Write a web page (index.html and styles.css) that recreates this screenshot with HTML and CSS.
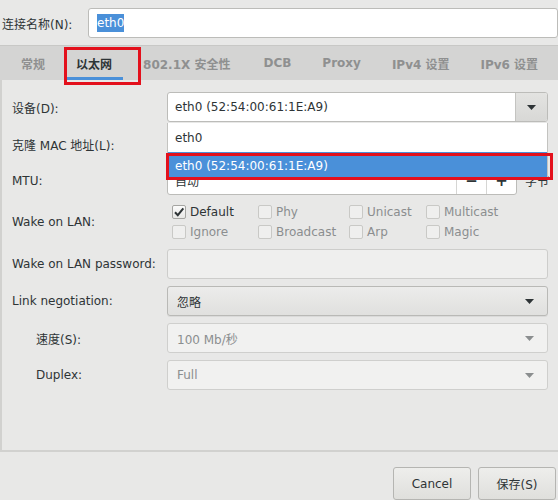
FILE: index.html
```html
<!DOCTYPE html>
<html>
<head>
<meta charset="utf-8">
<link rel="stylesheet" href="styles.css">
</head>
<body>
<div class="window">
  <div class="name-row">
    <span class="lbl">连接名称(N):</span>
    <div class="entry name-entry"><span class="sel">eth0</span></div>
  </div>
  <div class="notebook">
    <div class="tabs">
      <span class="tab">常规</span>
      <span class="tab active">以太网</span>
      <span class="tab tab-wide">802.1X 安全性</span>
      <span class="tab">DCB</span>
      <span class="tab">Proxy</span>
      <span class="tab">IPv4 设置</span>
      <span class="tab">IPv6 设置</span>
    </div>
    <div class="page">
      <div class="form">
        <span class="lbl">设备(D):</span>
        <div class="entry combo-entry">
          <span class="val">eth0 (52:54:00:61:1E:A9)</span>
          <span class="cbtn"><svg width="9" height="5" viewBox="0 0 9 5"><path d="M0 0h9L4.5 5z" fill="#2e3436"/></svg></span>
        </div>
        <span class="lbl">克隆 MAC 地址(L):</span>
        <div class="entry"></div>
        <span class="lbl">MTU:</span>
        <div class="mtu">
          <div class="entry spin">
            <span class="val">自动</span>
            <span class="sbtn">−</span>
            <span class="sbtn">+</span>
          </div>
          <span class="unit">字节</span>
        </div>
        <span class="lbl">Wake on LAN:</span>
        <div class="checks">
          <span class="chk on"><span class="box"><svg width="12" height="12" viewBox="0 0 12 12"><path d="M2 6.2l2.8 3L10.3 2.4" fill="none" stroke="#2e3436" stroke-width="2"/></svg></span>Default</span>
          <span class="chk"><span class="box"></span>Phy</span>
          <span class="chk"><span class="box"></span>Unicast</span>
          <span class="chk"><span class="box"></span>Multicast</span>
          <span class="chk"><span class="box"></span>Ignore</span>
          <span class="chk"><span class="box"></span>Broadcast</span>
          <span class="chk"><span class="box"></span>Arp</span>
          <span class="chk"><span class="box"></span>Magic</span>
        </div>
        <span class="lbl">Wake on LAN password:</span>
        <div class="entry dim"></div>
        <span class="lbl">Link negotiation:</span>
        <div class="combo">
          <span class="val">忽略</span>
          <svg width="9" height="5" viewBox="0 0 9 5"><path d="M0 0h9L4.5 5z" fill="#2e3436"/></svg>
        </div>
        <span class="lbl sub">速度(S):</span>
        <div class="combo off">
          <span class="val">100 Mb/秒</span>
          <svg width="9" height="5" viewBox="0 0 9 5"><path d="M0 0h9L4.5 5z" fill="#8b8e8f"/></svg>
        </div>
        <span class="lbl sub">Duplex:</span>
        <div class="combo off">
          <span class="val">Full</span>
          <svg width="9" height="5" viewBox="0 0 9 5"><path d="M0 0h9L4.5 5z" fill="#8b8e8f"/></svg>
        </div>
      </div>
    </div>
  </div>
  <div class="actions">
    <button class="btn">Cancel</button>
    <button class="btn">保存(S)</button>
  </div>

  <div class="popup">
    <div class="item">eth0</div>
    <div class="item selected">eth0 (52:54:00:61:1E:A9)</div>
  </div>
  <div class="mark mark-tab"></div>
  <div class="mark mark-item"></div>
</div>
</body>
</html>
```

FILE: styles.css
```css
* { box-sizing: border-box; }

html, body {
  margin: 0;
  padding: 0;
  background: #e8e8e7;
}

body {
  font-family: "DejaVu Sans", "Noto Sans CJK SC", sans-serif;
  font-size: 12px;
  color: #2e3436;
}

.window {
  position: relative;
  width: 558px;
  height: 500px;
  overflow: hidden;
  background: #e8e8e7;
  display: flex;
  flex-direction: column;
}

.name-row {
  display: grid;
  grid-template-columns: 86px 1fr;
  align-items: center;
  padding: 8px 0 7px 2px;
  height: 45px;
}

.entry {
  height: 30px;
  background: #ffffff;
  border: 1px solid #bcbcb9;
  border-radius: 3px;
  display: flex;
  align-items: center;
  padding: 0 7px;
}

.name-entry {
  padding-left: 8px;
}

.sel {
  background: #4a90d9;
  color: #ffffff;
  line-height: 18px;
}

.notebook {
  width: 562px;
  border-top: 1px solid #c8c8c6;
}

.tabs {
  height: 34px;
  background: #d4d4d3;
  display: flex;
  gap: 9px;
  padding-left: 10px;
  white-space: nowrap;
}

.tab {
  display: flex;
  align-items: center;
  padding: 0 11px;
  border-top: 3px solid transparent;
  border-bottom: 3px solid transparent;
  font-weight: bold;
  color: #8f9090;
}

.tab.tab-wide {
  padding-right: 13px;
}

.tab.active {
  color: #2e3436;
  border-bottom-color: #4a90d9;
}

.page {
  height: 372px;
  border-left: 2px solid #d1d1cf;
  border-bottom: 2px solid #d1d1cf;
  padding: 12px 0 0 10px;
}

.form {
  display: grid;
  grid-template-columns: 155px 381px;
  grid-template-rows: 30px 30px 29px 40px 30px 30px 30px 30px;
  row-gap: 7px;
  align-items: center;
}

.lbl {
  white-space: nowrap;
}

.lbl.sub {
  padding-left: 24px;
}

.combo-entry {
  padding-right: 0;
  justify-content: space-between;
}

.cbtn {
  width: 32px;
  height: 28px;
  border-left: 1px solid #c4c4c1;
  background: linear-gradient(#e3e3e1, #d8d8d6);
  border-radius: 0 2px 2px 0;
  display: flex;
  align-items: center;
  justify-content: center;
}

.mtu {
  display: flex;
  align-items: center;
  height: 29px;
  white-space: nowrap;
}

.spin {
  flex: 0 0 350px;
  height: 29px;
  padding-right: 0;
}

.spin .val {
  flex: 1;
}

.sbtn {
  width: 30px;
  height: 27px;
  border-left: 1px solid #d6d6d4;
  display: flex;
  align-items: center;
  justify-content: center;
  font-size: 15px;
  font-weight: bold;
  color: #2e3436;
}

.unit {
  flex: 0 0 auto;
  margin-left: 8px;
}

.checks {
  display: grid;
  grid-template-columns: 86px 91px 77px auto;
  grid-template-rows: 20px 20px;
  padding-left: 5px;
  height: 40px;
}

.chk {
  display: flex;
  align-items: center;
  color: #8b8e8f;
  white-space: nowrap;
}

.chk.on {
  color: #2e3436;
}

.box {
  width: 14px;
  height: 14px;
  margin-right: 4px;
  border: 1px solid #c9c9c6;
  border-radius: 2px;
  background: #efefee;
  display: flex;
  align-items: center;
  justify-content: center;
}

.chk.on .box {
  border-color: #a5a5a2;
  background: linear-gradient(#fbfbfb, #e8e8e6);
}

.entry.dim {
  background: #efefee;
  border-color: #cdcdcb;
}

.combo {
  height: 30px;
  border: 1px solid #b9b9b6;
  border-radius: 3px;
  background: linear-gradient(#ececeb, #e0e0de);
  box-shadow: 0 1px 0 rgba(0,0,0,0.06);
  display: flex;
  align-items: center;
  justify-content: space-between;
  padding: 0 13px 0 9px;
}

.combo.off {
  background: #f1f1f0;
  border-color: #cfcfcd;
  box-shadow: none;
  color: #8b8e8f;
}

.actions {
  flex: 1;
  display: flex;
  justify-content: flex-end;
  gap: 7px;
  padding: 15px 2px 0 0;
}

.btn {
  width: 78px;
  height: 33px;
  font-family: inherit;
  font-size: 12px;
  color: #2e3436;
  border: 1px solid #b5b5b2;
  border-radius: 3px;
  background: linear-gradient(#eeeeec, #dfdfdc);
  padding: 0;
}

.popup {
  position: absolute;
  left: 167px;
  top: 123px;
  width: 381px;
  height: 57px;
  background: #ffffff;
  border: 1px solid #c3c3c0;
  border-top: none;
  display: flex;
  flex-direction: column;
}

.item {
  height: 29px;
  display: flex;
  align-items: center;
  padding-left: 7px;
}

.item.selected {
  height: 27px;
  background: #4a90d9;
  color: #ffffff;
}

.mark {
  position: absolute;
  border: 3px solid #e3101c;
}

.mark-tab {
  left: 64px;
  top: 47px;
  width: 77px;
  height: 38px;
}

.mark-item {
  left: 166px;
  top: 153px;
  width: 387px;
  height: 27px;
}
```
